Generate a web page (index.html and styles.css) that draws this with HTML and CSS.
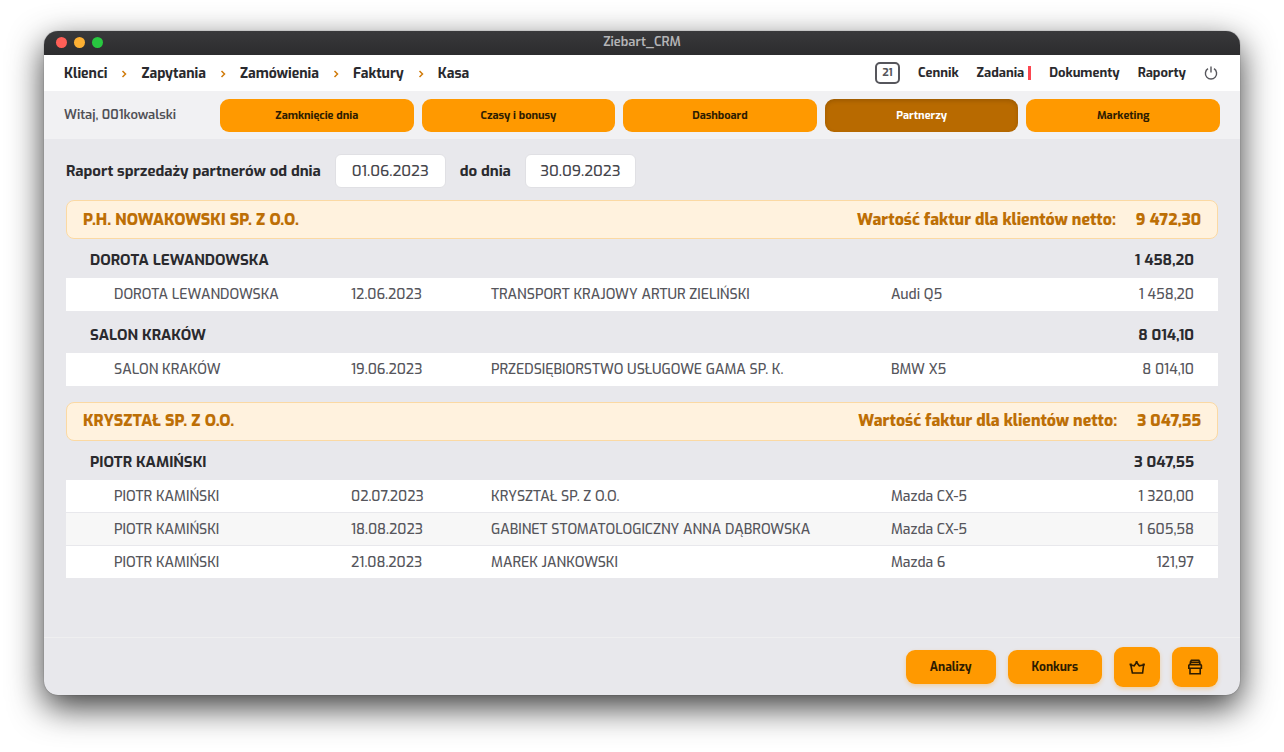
FILE: index.html
```html
<!DOCTYPE html>
<html lang="pl">
<head>
    <meta charset="UTF-8">
    <meta name="viewport" content="width=device-width, initial-scale=1.0">
    <title>Ziebart_CRM</title>
    <link rel="stylesheet" href="styles.css">
</head>
<body>
    <div class="window">
        <div class="titlebar">
            <div class="dots">
                <span class="dot dot-red"></span>
                <span class="dot dot-yellow"></span>
                <span class="dot dot-green"></span>
            </div>
            <div class="title">Ziebart_CRM</div>
        </div>

        <header class="topbar">
            <nav class="nav-process">
                <a href="#">Klienci</a>
                <svg class="chevron" viewBox="0 0 6 8"><path d="M1.5 1L4.5 4L1.5 7"/></svg>
                <a href="#">Zapytania</a>
                <svg class="chevron" viewBox="0 0 6 8"><path d="M1.5 1L4.5 4L1.5 7"/></svg>
                <a href="#">Zamówienia</a>
                <svg class="chevron" viewBox="0 0 6 8"><path d="M1.5 1L4.5 4L1.5 7"/></svg>
                <a href="#">Faktury</a>
                <svg class="chevron" viewBox="0 0 6 8"><path d="M1.5 1L4.5 4L1.5 7"/></svg>
                <a href="#">Kasa</a>
            </nav>
            <nav class="nav-tools">
                <a href="#" class="calendar">21</a>
                <a href="#">Cennik</a>
                <a href="#" class="tasks">Zadania</a>
                <a href="#">Dokumenty</a>
                <a href="#">Raporty</a>
                <a href="#" class="power" aria-label="Wyloguj">
                    <svg viewBox="0 0 14 14"><path d="M4 2.7A5.6 5.6 0 1 0 10 2.7M7 0.6V6.6"/></svg>
                </a>
            </nav>
        </header>

        <div class="subbar">
            <div class="welcome">Witaj, 001kowalski</div>
            <div class="tabs">
                <button type="button" class="tab">Zamknięcie dnia</button>
                <button type="button" class="tab">Czasy i bonusy</button>
                <button type="button" class="tab">Dashboard</button>
                <button type="button" class="tab active">Partnerzy</button>
                <button type="button" class="tab">Marketing</button>
            </div>
        </div>

        <main class="content">
            <form class="filters">
                <label for="date-from">Raport sprzedaży partnerów od dnia</label>
                <input type="text" id="date-from" value="01.06.2023">
                <label for="date-to">do dnia</label>
                <input type="text" id="date-to" value="30.09.2023">
            </form>

            <section class="partner">
                <div class="partner-head">
                    <h2>P.H. NOWAKOWSKI SP. Z O.O.</h2>
                    <div class="partner-total"><span>Wartość faktur dla klientów netto:</span><span>9&nbsp;472,30</span></div>
                </div>
                <table class="report">
                    <colgroup><col class="col-person"><col class="col-date"><col class="col-client"><col class="col-car"><col></colgroup>
                    <tbody>
                        <tr class="group"><th colspan="4">DOROTA LEWANDOWSKA</th><td>1&nbsp;458,20</td></tr>
                        <tr><td>DOROTA LEWANDOWSKA</td><td>12.06.2023</td><td>TRANSPORT KRAJOWY ARTUR ZIELIŃSKI</td><td>Audi Q5</td><td>1&nbsp;458,20</td></tr>
                    </tbody>
                    <tbody>
                        <tr class="group"><th colspan="4">SALON KRAKÓW</th><td>8&nbsp;014,10</td></tr>
                        <tr><td>SALON KRAKÓW</td><td>19.06.2023</td><td>PRZEDSIĘBIORSTWO USŁUGOWE GAMA SP. K.</td><td>BMW X5</td><td>8&nbsp;014,10</td></tr>
                    </tbody>
                </table>
            </section>

            <section class="partner">
                <div class="partner-head">
                    <h2>KRYSZTAŁ SP. Z O.O.</h2>
                    <div class="partner-total"><span>Wartość faktur dla klientów netto:</span><span>3&nbsp;047,55</span></div>
                </div>
                <table class="report">
                    <colgroup><col class="col-person"><col class="col-date"><col class="col-client"><col class="col-car"><col></colgroup>
                    <tbody>
                        <tr class="group"><th colspan="4">PIOTR KAMIŃSKI</th><td>3&nbsp;047,55</td></tr>
                        <tr><td>PIOTR KAMIŃSKI</td><td>02.07.2023</td><td>KRYSZTAŁ SP. Z O.O.</td><td>Mazda CX-5</td><td>1&nbsp;320,00</td></tr>
                        <tr><td>PIOTR KAMIŃSKI</td><td>18.08.2023</td><td>GABINET STOMATOLOGICZNY ANNA DĄBROWSKA</td><td>Mazda CX-5</td><td>1&nbsp;605,58</td></tr>
                        <tr><td>PIOTR KAMIŃSKI</td><td>21.08.2023</td><td>MAREK JANKOWSKI</td><td>Mazda 6</td><td>121,97</td></tr>
                    </tbody>
                </table>
            </section>
        </main>

        <footer class="actions">
            <button type="button" class="action">Analizy</button>
            <button type="button" class="action">Konkurs</button>
            <button type="button" class="action action-icon" aria-label="Ranking">
                <svg viewBox="0 0 16 16"><path d="M3.4 14L1.8 6L5.2 6.8L7.6 3.4L10.3 6.8L14.6 6L13.6 14Z"/><path class="fill" d="M0.6 4.4h2.2v2.2H0.6ZM13.6 4.4h2.2v2.2h-2.2ZM6.6 2h2v2h-2Z"/></svg>
            </button>
            <button type="button" class="action action-icon" aria-label="Drukuj">
                <svg viewBox="0 0 16 16"><path d="M3.4 5.4V3L4.4 1.2H11.8L12.8 3V5.4M3.4 3.2H12.8M2.4 5.6H13.8L14.4 6.4V9.2H1.8V6.4ZM3 9.4V14.8H13.2V9.4"/></svg>
            </button>
        </footer>
    </div>
</body>
</html>
```
FILE: styles.css
```css
* {
    box-sizing: border-box;
}

body {
    margin: 0;
    padding: 31px 44px 57px;
    min-height: 100vh;
    display: flex;
    background-color: #fff;
    color: #2a2a2e;
    font-family: Exo, "Exo 2", Roboto, sans-serif;
    font-size: 14px;
    line-height: 20px;
}

a {
    color: inherit;
    text-decoration: none;
}

button,
input {
    font-family: inherit;
}

svg {
    display: block;
    fill: none;
    stroke: currentColor;
}

.window {
    flex: 1;
    display: flex;
    flex-direction: column;
    border-radius: 14px;
    overflow: hidden;
    background-color: #e8e8ec;
    box-shadow: 0 0 1px rgba(0, 0, 0, 0.6), 0 12px 34px rgba(0, 0, 0, 0.78);
}

/* Title bar */
.titlebar {
    height: 24px;
    padding: 0 12px;
    display: grid;
    grid-template-columns: 1fr auto 1fr;
    align-items: center;
    background: linear-gradient(#39393b, #2c2c2e);
}

.dots {
    display: flex;
    gap: 7px;
    padding-bottom: 2px;
}

.dot {
    width: 11px;
    height: 11px;
    border-radius: 50%;
}

.dot-red {
    background-color: #ff5f57;
}

.dot-yellow {
    background-color: #fdb033;
}

.dot-green {
    background-color: #28c840;
}

.title {
    padding-bottom: 2px;
    color: #b4b4b6;
    font-size: 13px;
    font-weight: 600;
}

/* Navigation */
.topbar {
    height: 36px;
    padding: 2px 20px 0;
    display: flex;
    justify-content: space-between;
    align-items: center;
    background-color: #fff;
    font-weight: 700;
}

.nav-process,
.nav-tools {
    display: flex;
    align-items: center;
    gap: 14px;
}

.nav-tools {
    gap: 18px;
    padding-right: 2px;
    padding-bottom: 2px;
    font-size: 13px;
}

.chevron {
    width: 6px;
    height: 8px;
    color: #d07c0c;
    stroke-width: 1.5;
}

.calendar {
    width: 25px;
    height: 22px;
    border: 2px solid #56565c;
    border-radius: 5px;
    color: #56565c;
    font-size: 11px;
    line-height: 18px;
    text-align: center;
}

.tasks {
    display: flex;
    align-items: center;
    gap: 4px;
}

.tasks::after {
    content: "";
    width: 3px;
    height: 14px;
    background-color: #fb4650;
}

.power {
    color: #56565c;
}

.power svg {
    width: 14px;
    height: 14px;
    stroke-width: 1.4;
}

/* Tabs */
.subbar {
    height: 48px;
    padding: 0 20px;
    display: flex;
    align-items: center;
    background-color: #f1f1f3;
}

.welcome {
    width: 156px;
    color: #505056;
    font-size: 13px;
    font-weight: 600;
}

.tabs {
    flex: 1;
    display: grid;
    grid-template-columns: repeat(5, 1fr);
    gap: 8px;
}

.tab,
.action {
    border: none;
    border-radius: 9px;
    background-color: #ff9900;
    color: #2e1c00;
    font-weight: 700;
    cursor: pointer;
}

.tab {
    height: 33px;
    padding: 0 8px;
    font-size: 11px;
}

.tab.active {
    background-color: #b86a00;
    color: #fff;
    box-shadow: inset 0 2px 4px rgba(0, 0, 0, 0.15);
}

/* Report */
.content {
    flex: 1;
    padding: 15px 22px 24px;
}

.filters {
    display: flex;
    align-items: center;
    gap: 14px;
    font-size: 15px;
    font-weight: 700;
}

.filters input {
    width: 111px;
    height: 34px;
    padding: 0 12px;
    border: 1px solid #e0e0e4;
    border-radius: 6px;
    background-color: #fff;
    color: #46464c;
    font-size: 15px;
    font-weight: 500;
    text-align: center;
}

.partner {
    margin-top: 12px;
}

.partner + .partner {
    margin-top: 15px;
}

.partner-head {
    height: 39px;
    padding: 0 16px;
    display: flex;
    justify-content: space-between;
    align-items: center;
    border: 1px solid #fbd9a3;
    border-radius: 8px;
    background-color: #fff2de;
    color: #bd6f06;
    font-size: 16px;
    font-weight: 800;
}

.partner-head h2 {
    margin: 0;
    font-size: 16px;
    font-weight: 800;
}

.partner-total {
    display: flex;
    gap: 20px;
}

.report {
    width: 100%;
    table-layout: fixed;
    border-collapse: collapse;
    color: #56565c;
    font-weight: 500;
}

.col-person {
    width: 285px;
}

.col-date {
    width: 140px;
}

.col-client {
    width: 400px;
}

.col-car {
    width: 140px;
}

.report td {
    height: 33px;
    padding: 2px 0 0;
    background-color: #fff;
    border-bottom: 1px solid #e8e8ec;
}

.report tr:nth-child(3) td {
    background-color: #f7f7f7;
}

.report td:first-child {
    padding-left: 48px;
}

.report td:last-child {
    padding-right: 24px;
    text-align: right;
}

.report .group th,
.report .group td {
    height: 39px;
    padding-top: 3px;
    padding-bottom: 0;
    background-color: transparent;
    color: #2a2a2e;
    font-size: 15px;
    font-weight: 700;
    border: none;
}

.report .group th {
    padding-left: 24px;
    text-align: left;
}

.report tbody + tbody .group th,
.report tbody + tbody .group td {
    height: 42px;
    padding-top: 6px;
}

/* Bottom actions */
.actions {
    height: 58px;
    padding: 0 22px;
    display: flex;
    justify-content: flex-end;
    align-items: center;
    gap: 12px;
    border-top: 1px solid #efeff0;
}

.action {
    height: 34px;
    padding: 0 24px;
    font-size: 12px;
    box-shadow: 0 2px 4px rgba(255, 153, 0, 0.3);
}

.action-icon {
    width: 46px;
    height: 40px;
    padding: 0 15px;
}

.action-icon svg {
    width: 16px;
    height: 16px;
    stroke-width: 1.6;
}

.action-icon .fill {
    fill: currentColor;
    stroke: none;
}
```
